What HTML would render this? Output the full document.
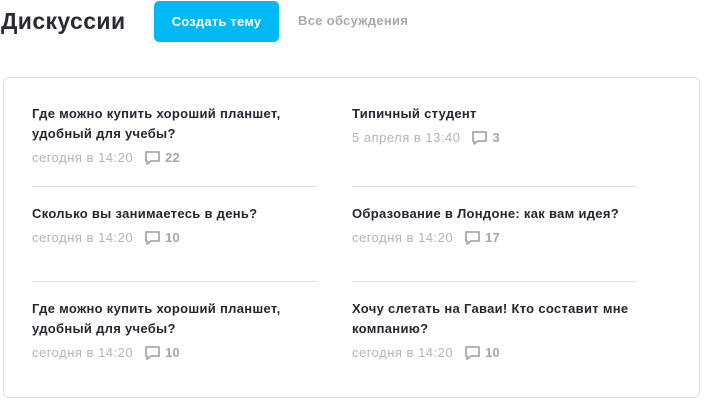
<!DOCTYPE html>
<html><head><meta charset="utf-8"><style>
body{margin:0;width:708px;height:402px;background:#fff;font-family:"Liberation Sans",sans-serif;position:relative;overflow:hidden}
.a{position:absolute;white-space:nowrap}
h1{position:absolute;left:1px;top:6px;margin:0;font-size:23px;font-weight:bold;color:#2a2a33;line-height:30px;letter-spacing:0.4px}
.btn{position:absolute;left:154px;top:1px;width:125px;height:41px;background:#00b9f2;border-radius:5px;color:#fff;font-weight:bold;font-size:13px;line-height:41px;text-align:center;letter-spacing:0.2px}
.all{left:298px;top:13px;font-size:13px;font-weight:bold;color:#a9a9ad;letter-spacing:0.3px}
.card{position:absolute;left:3px;top:77px;width:697px;height:321px;border:1px solid #e0e0e0;border-radius:6px;box-sizing:border-box}
.t{font-size:13px;font-weight:bold;color:#262630;line-height:20px;letter-spacing:0.3px}
.m{font-size:13px;color:#b3b3b8;line-height:16px;letter-spacing:0.5px}
.m b{color:#a6a6ab;margin-left:4px;letter-spacing:0.2px}
.m svg{vertical-align:-4px;margin-left:11px}
.hr{position:absolute;height:1px;background:#e2e2e2}
</style></head><body>
<h1>Дискуссии</h1>
<div class="btn">Создать тему</div>
<div class="a all">Все обсуждения</div>
<div class="card"></div>

<div class="a t" style="left:32px;top:104px">Где можно купить хороший планшет,<br>удобный для учебы?</div>
<div class="a m" style="left:32px;top:150px">сегодня в 14:20<svg width="17" height="16" viewBox="0 0 17 16"><path d="M2 2h13v9H7l-4 3v-3H2z" fill="none" stroke="#a8a8ad" stroke-width="1.8" stroke-linejoin="round"/></svg><b>22</b></div>
<div class="hr" style="left:32px;width:286px;top:186px"></div>
<div class="a t" style="left:32px;top:204px">Сколько вы занимаетесь в день?</div>
<div class="a m" style="left:32px;top:230px">сегодня в 14:20<svg width="17" height="16" viewBox="0 0 17 16"><path d="M2 2h13v9H7l-4 3v-3H2z" fill="none" stroke="#a8a8ad" stroke-width="1.8" stroke-linejoin="round"/></svg><b>10</b></div>
<div class="hr" style="left:32px;width:286px;top:281px"></div>
<div class="a t" style="left:32px;top:299px">Где можно купить хороший планшет,<br>удобный для учебы?</div>
<div class="a m" style="left:32px;top:345px">сегодня в 14:20<svg width="17" height="16" viewBox="0 0 17 16"><path d="M2 2h13v9H7l-4 3v-3H2z" fill="none" stroke="#a8a8ad" stroke-width="1.8" stroke-linejoin="round"/></svg><b>10</b></div>

<div class="a t" style="left:352px;top:104px">Типичный студент</div>
<div class="a m" style="left:352px;top:130px">5 апреля в 13:40<svg width="17" height="16" viewBox="0 0 17 16"><path d="M2 2h13v9H7l-4 3v-3H2z" fill="none" stroke="#a8a8ad" stroke-width="1.8" stroke-linejoin="round"/></svg><b>3</b></div>
<div class="hr" style="left:352px;width:285px;top:186px"></div>
<div class="a t" style="left:352px;top:204px">Образование в Лондоне: как вам идея?</div>
<div class="a m" style="left:352px;top:230px">сегодня в 14:20<svg width="17" height="16" viewBox="0 0 17 16"><path d="M2 2h13v9H7l-4 3v-3H2z" fill="none" stroke="#a8a8ad" stroke-width="1.8" stroke-linejoin="round"/></svg><b>17</b></div>
<div class="hr" style="left:352px;width:285px;top:281px"></div>
<div class="a t" style="left:352px;top:299px">Хочу слетать на Гаваи! Кто составит мне<br>компанию?</div>
<div class="a m" style="left:352px;top:345px">сегодня в 14:20<svg width="17" height="16" viewBox="0 0 17 16"><path d="M2 2h13v9H7l-4 3v-3H2z" fill="none" stroke="#a8a8ad" stroke-width="1.8" stroke-linejoin="round"/></svg><b>10</b></div>
</body></html>
